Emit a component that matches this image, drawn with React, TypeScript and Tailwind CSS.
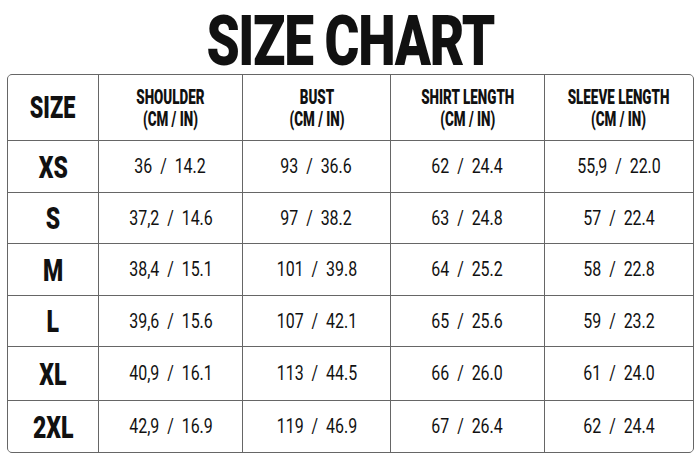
const headers = [
  ["SHOULDER", "(CM / IN)"],
  ["BUST", "(CM / IN)"],
  ["SHIRT LENGTH", "(CM / IN)"],
  ["SLEEVE LENGTH", "(CM / IN)"],
];

const rows = [
  { size: "XS", values: ["36 / 14.2", "93 / 36.6", "62 / 24.4", "55,9 / 22.0"] },
  { size: "S", values: ["37,2 / 14.6", "97 / 38.2", "63 / 24.8", "57 / 22.4"] },
  { size: "M", values: ["38,4 / 15.1", "101 / 39.8", "64 / 25.2", "58 / 22.8"] },
  { size: "L", values: ["39,6 / 15.6", "107 / 42.1", "65 / 25.6", "59 / 23.2"] },
  { size: "XL", values: ["40,9 / 16.1", "113 / 44.5", "66 / 26.0", "61 / 24.0"] },
  { size: "2XL", values: ["42,9 / 16.9", "119 / 46.9", "67 / 26.4", "62 / 24.4"] },
];

const font = { fontFamily: "Roboto, 'Liberation Sans', sans-serif" };

const Cell = ({ children }: { children: React.ReactNode }) => (
  <div className="flex items-center justify-center bg-white">{children}</div>
);

const App = () => {
  return (
    <div className="flex h-[467px] w-[700px] flex-col bg-white text-[#111]" style={font}>
      <div className="flex h-[74px] justify-center pt-[6px]">
        <span className="inline-block h-[68px] scale-x-[0.76] text-[70px] font-black leading-[70px] tracking-tight">
          SIZE CHART
        </span>
      </div>
      <div className="ml-[7px] grid w-[687px] grid-cols-[90px_143px_147px_153px_148px] grid-rows-[65px_51px_50px_51px_50px_53px_51px] gap-px overflow-hidden rounded-[5px] border border-[#666] bg-[#666]">
        <Cell>
          <span className="inline-block scale-x-[0.7] text-[31px] font-black leading-none">SIZE</span>
        </Cell>
        {headers.map(([a, b]) => (
          <Cell key={a}>
            <span className="inline-block scale-x-[0.64] text-center text-[21px] font-black leading-[22px] whitespace-nowrap">
              {a}
              <br />
              {b}
            </span>
          </Cell>
        ))}
        {rows.map((r) => (
          <>
            <Cell key={r.size}>
              <span className="inline-block scale-x-[0.72] text-[32px] font-black leading-none">{r.size}</span>
            </Cell>
            {r.values.map((v, i) => (
              <Cell key={r.size + i}>
                <span className="inline-block scale-x-[0.76] text-[21px] font-normal leading-none whitespace-pre">
                  {v.replace(" / ", "  /  ")}
                </span>
              </Cell>
            ))}
          </>
        ))}
      </div>
    </div>
  );
};

export default App;
